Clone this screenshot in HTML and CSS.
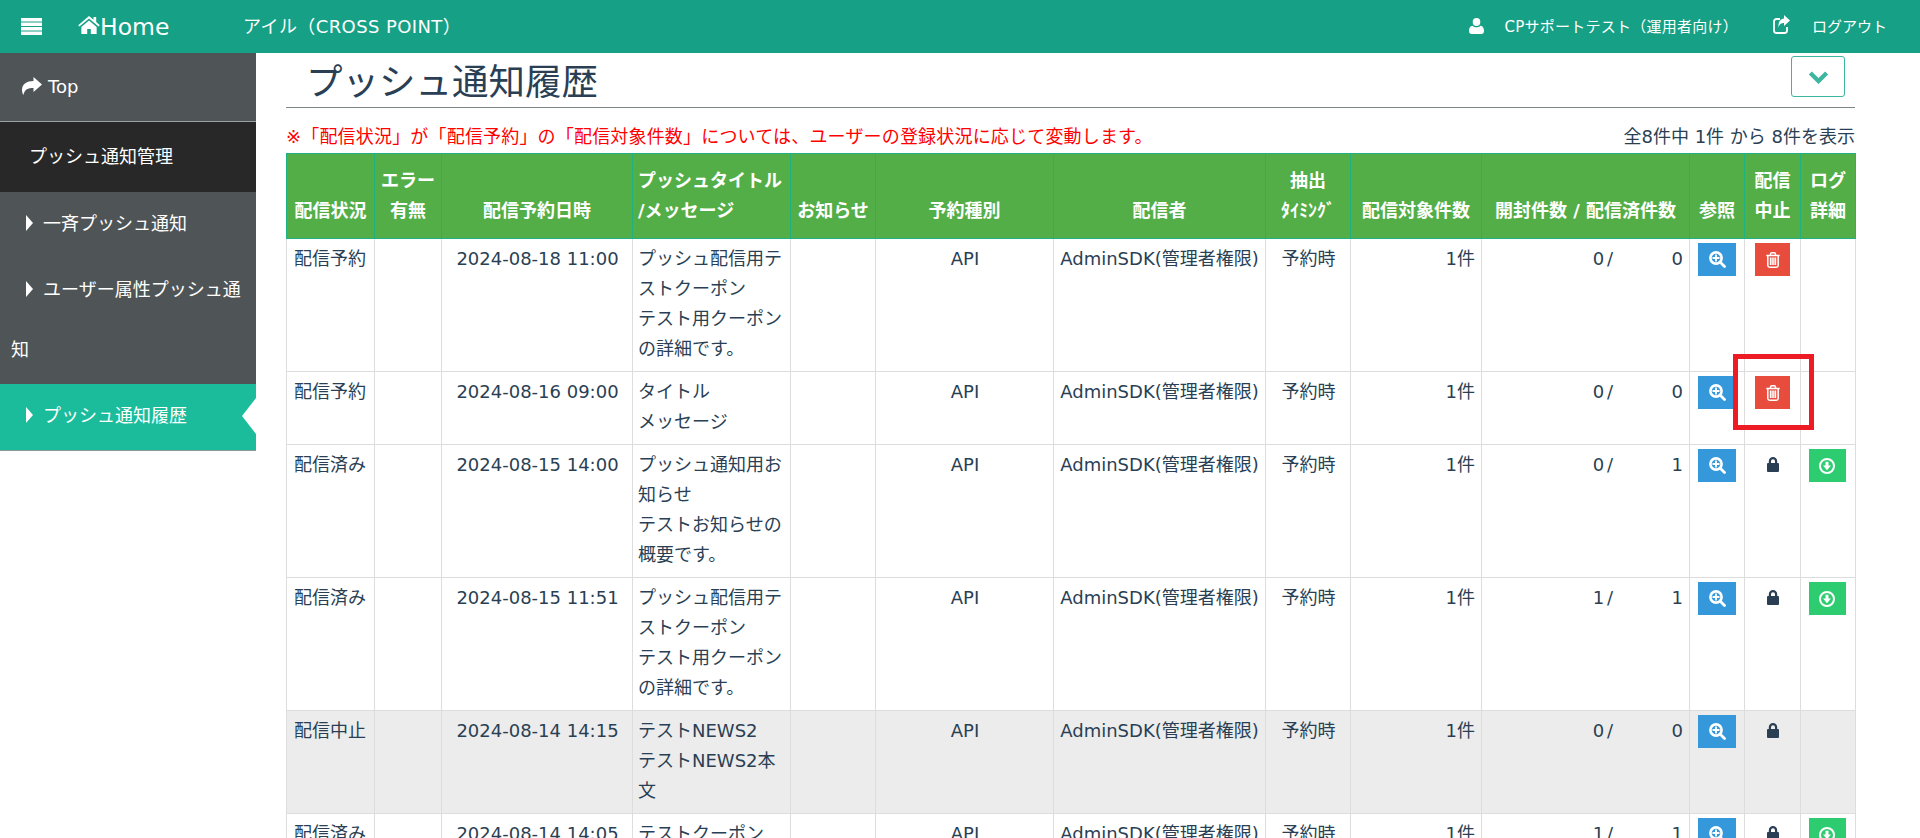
FILE: index.html
```html
<!DOCTYPE html>
<html lang="ja">
<head>
<meta charset="utf-8">
<title>プッシュ通知履歴</title>
<link rel="stylesheet" href="styles.css">
</head>
<body>
<svg class="sprite" xmlns="http://www.w3.org/2000/svg">
  <symbol id="i-home" viewBox="0 0 24 20"><path d="M12 0 L0 10.200 l1.400 1.600 L12 2.800 l10.600 9 L24 10.200 L20 6.800 V1 h-3 v3.200 Z M12 5 L3.500 12.200 V20 H10 v-5.500 h4 V20 h6.500 v-7.800 Z"/></symbol>
  <symbol id="i-share" viewBox="0 0 20 20"><path d="M11.500 1 L20 8.500 L11.500 16 V12 C6 12 2.500 13 1.500 19 C.5 18 0 15.500 0 14 C0 8 5 5 11.500 5 Z"/></symbol>
  <symbol id="i-user" viewBox="0 0 15 16"><ellipse cx="7.500" cy="4" rx="3.800" ry="4"/><path d="M0 13 C0 10 1 8 3.500 7.700 C4.500 8.700 6 9.200 7.500 9.200 S10.500 8.700 11.500 7.700 C14 8 15 10 15 13 C15 15 14 16 12.500 16 H2.500 C1 16 0 15 0 13 Z"/></symbol>
  <symbol id="i-out" viewBox="0 0 17 19"><path d="M14 12 V15.500 A2.500 2.500 0 0 1 11.500 18 H3.500 A2.500 2.500 0 0 1 1 15.500 V6.500 A2.500 2.500 0 0 1 3.500 4 H7" fill="none" stroke="currentColor" stroke-width="1.800"/><path d="M11 0 L17 5.500 L11 11 V8 C8.500 8 6.500 8.700 5.500 12.500 C5 7 7.500 3.500 11 3.500 Z"/></symbol>
  <symbol id="i-search" viewBox="0 0 17 17"><circle cx="7" cy="7" r="5.600" fill="none" stroke="currentColor" stroke-width="2.600"/><path d="M11.500 11.500 L15.500 15.500" stroke="currentColor" stroke-width="2.800" stroke-linecap="round"/><path d="M7 3.500 V10.500 M3.500 7 H10.500" stroke="currentColor" stroke-width="1.800"/></symbol>
  <symbol id="i-trash" viewBox="0 0 14 16"><path d="M.3 3.500 H13.700 M4.500 3 V2 A1.300 1.300 0 0 1 5.800 .8 H8.200 A1.300 1.300 0 0 1 9.500 2 V3 M1.800 4 V13.500 A1.800 1.800 0 0 0 3.600 15.200 H10.400 A1.800 1.800 0 0 0 12.200 13.500 V4" fill="none" stroke="currentColor" stroke-width="1.500"/><path d="M3.800 5.500 H5.600 V13 H3.800 Z M6.200 5.500 H7.800 V13 H6.200 Z M8.400 5.500 H10.200 V13 H8.400 Z"/></symbol>
  <symbol id="i-dl" viewBox="0 0 16 16"><circle cx="8" cy="8" r="7" fill="none" stroke="currentColor" stroke-width="2"/><path d="M6.500 3.800 H9.500 V7.500 H12 L8 12.200 L4 7.500 H6.500 Z"/></symbol>
  <symbol id="i-lock" viewBox="0 0 12 15"><path fill-rule="evenodd" d="M1.800 6 V4.200 A4.200 4.200 0 0 1 10.200 4.200 V6 H11 A1 1 0 0 1 12 7 V14 A1 1 0 0 1 11 15 H1 A1 1 0 0 1 0 14 V7 A1 1 0 0 1 1 6 Z M4 6 H8 V4.200 A2 2 0 0 0 4 4.200 Z"/></symbol>
</svg>

<header class="topbar">
  <svg class="burger" viewBox="0 0 21 17"><rect width="21" height="3.500"/><rect y="4.500" width="21" height="3.500"/><rect y="9" width="21" height="3.500"/><rect y="13.500" width="21" height="3.500"/></svg>
  <a class="brand"><svg class="ic-home"><use href="#i-home"/></svg>Home</a>
  <span class="site">アイル（CROSS POINT）</span>
  <span class="topright">
    <svg class="ic-user"><use href="#i-user"/></svg>
    <span class="uname">CPサポートテスト（運用者向け）</span>
    <svg class="ic-out"><use href="#i-out"/></svg>
    <span class="logout">ログアウト</span>
  </span>
</header>

<div class="layout">
  <nav class="side">
    <a class="side-top"><svg class="ic-share"><use href="#i-share"/></svg>Top</a>
    <div class="side-group">プッシュ通知管理</div>
    <a class="side-item"><i class="caret"></i>一斉プッシュ通知</a>
    <a class="side-item"><i class="caret"></i>ユーザー属性プッシュ通知</a>
    <a class="side-item active"><i class="caret"></i>プッシュ通知履歴</a>
  </nav>

  <main class="main">
    <div class="title-row">
      <h1>プッシュ通知履歴</h1>
      <button class="collapse"><svg viewBox="0 0 18 12"><path d="M2 2.500 L9 9.500 L16 2.500" fill="none" stroke="currentColor" stroke-width="3.600"/></svg></button>
    </div>
    <div class="info-row">
      <p class="notice">※「配信状況」が「配信予約」の「配信対象件数」については、ユーザーの登録状況に応じて変動します。</p>
      <p class="count">全8件中 1件 から 8件を表示</p>
    </div>
    <table class="list">
      <colgroup>
        <col class="w88"><col class="w67"><col class="w191"><col class="w158"><col class="w85"><col class="w178"><col class="w212"><col class="w85"><col class="w131"><col class="w208"><col class="w55"><col class="w56"><col class="w55">
      </colgroup>
      <thead>
        <tr>
          <th>配信状況</th><th>エラー<br>有無</th><th>配信予約日時</th><th class="l">プッシュタイトル<br>/メッセージ</th><th>お知らせ</th><th>予約種別</th><th>配信者</th><th>抽出<br>ﾀｲﾐﾝｸﾞ</th><th>配信対象件数</th><th>開封件数 / 配信済件数</th><th>参照</th><th>配信<br>中止</th><th>ログ<br>詳細</th>
        </tr>
      </thead>
      <tbody>
        <tr>
          <td>配信予約</td><td></td><td class="c">2024-08-18 11:00</td>
          <td class="t">プッシュ配信用テストクーポン<br>テスト用クーポンの詳細です。</td><td></td><td class="c">API</td><td class="c nw">AdminSDK(管理者権限)</td><td class="c">予約時</td><td class="r">1件</td>
          <td><div class="nums"><span class="a">0 /</span><span class="b">0</span></div></td>
          <td class="ic"><a class="btn blue"><svg class="s17"><use href="#i-search"/></svg></a></td>
          <td class="ic"><a class="btn red"><svg class="s-trash"><use href="#i-trash"/></svg></a></td>
          <td class="ic"></td>
        </tr>
        <tr>
          <td>配信予約</td><td></td><td class="c">2024-08-16 09:00</td>
          <td class="t">タイトル<br>メッセージ</td><td></td><td class="c">API</td><td class="c nw">AdminSDK(管理者権限)</td><td class="c">予約時</td><td class="r">1件</td>
          <td><div class="nums"><span class="a">0 /</span><span class="b">0</span></div></td>
          <td class="ic"><a class="btn blue"><svg class="s17"><use href="#i-search"/></svg></a></td>
          <td class="ic mark-host"><a class="btn red"><svg class="s-trash"><use href="#i-trash"/></svg></a><span class="mark"></span></td>
          <td class="ic"></td>
        </tr>
        <tr>
          <td>配信済み</td><td></td><td class="c">2024-08-15 14:00</td>
          <td class="t">プッシュ通知用お知らせ<br>テストお知らせの概要です。</td><td></td><td class="c">API</td><td class="c nw">AdminSDK(管理者権限)</td><td class="c">予約時</td><td class="r">1件</td>
          <td><div class="nums"><span class="a">0 /</span><span class="b">1</span></div></td>
          <td class="ic"><a class="btn blue"><svg class="s17"><use href="#i-search"/></svg></a></td>
          <td class="ic"><svg class="s-lock"><use href="#i-lock"/></svg></td>
          <td class="ic"><a class="btn green"><svg class="s16"><use href="#i-dl"/></svg></a></td>
        </tr>
        <tr>
          <td>配信済み</td><td></td><td class="c">2024-08-15 11:51</td>
          <td class="t">プッシュ配信用テストクーポン<br>テスト用クーポンの詳細です。</td><td></td><td class="c">API</td><td class="c nw">AdminSDK(管理者権限)</td><td class="c">予約時</td><td class="r">1件</td>
          <td><div class="nums"><span class="a">1 /</span><span class="b">1</span></div></td>
          <td class="ic"><a class="btn blue"><svg class="s17"><use href="#i-search"/></svg></a></td>
          <td class="ic"><svg class="s-lock"><use href="#i-lock"/></svg></td>
          <td class="ic"><a class="btn green"><svg class="s16"><use href="#i-dl"/></svg></a></td>
        </tr>
        <tr class="stopped">
          <td>配信中止</td><td></td><td class="c">2024-08-14 14:15</td>
          <td class="t">テストNEWS2<br>テストNEWS2本文</td><td></td><td class="c">API</td><td class="c nw">AdminSDK(管理者権限)</td><td class="c">予約時</td><td class="r">1件</td>
          <td><div class="nums"><span class="a">0 /</span><span class="b">0</span></div></td>
          <td class="ic"><a class="btn blue"><svg class="s17"><use href="#i-search"/></svg></a></td>
          <td class="ic"><svg class="s-lock"><use href="#i-lock"/></svg></td>
          <td class="ic"></td>
        </tr>
        <tr>
          <td>配信済み</td><td></td><td class="c">2024-08-14 14:05</td>
          <td class="t">テストクーポン</td><td></td><td class="c">API</td><td class="c nw">AdminSDK(管理者権限)</td><td class="c">予約時</td><td class="r">1件</td>
          <td><div class="nums"><span class="a">1 /</span><span class="b">1</span></div></td>
          <td class="ic"><a class="btn blue"><svg class="s17"><use href="#i-search"/></svg></a></td>
          <td class="ic"><svg class="s-lock"><use href="#i-lock"/></svg></td>
          <td class="ic"><a class="btn green"><svg class="s16"><use href="#i-dl"/></svg></a></td>
        </tr>
      </tbody>
    </table>
  </main>
</div>
</body>
</html>
```

FILE: styles.css
```css
* { box-sizing: border-box; }
html, body { margin: 0; height: 100%; overflow: hidden; background: #fff; }
body {
  font-family: "DejaVu Sans", "Noto Sans CJK JP", sans-serif;
  font-size: 18px;
  line-height: 30px;
  color: #2a3f54;
}
.sprite { display: none; }
svg { fill: currentColor; display: block; }

/* top bar */
.topbar {
  height: 53px;
  background: #16a085;
  color: #fff;
  display: flex;
  align-items: center;
  padding-left: 21px;
}
.burger { width: 21px; height: 17px; margin-right: 36px; }
.brand { display: flex; align-items: center; font-size: 23.500px; width: 165px; }
.ic-home { width: 22px; height: 18px; margin-top: -3px; }
.site { font-size: 18px; letter-spacing: .4px; }
.topright { margin-left: auto; display: flex; align-items: center; padding-right: 33px; font-size: 15px; }
.ic-user { width: 15px; height: 16px; margin-right: 20px; margin-top: -1px; }
.uname { margin-right: 35px; letter-spacing: .25px; }
.ic-out { width: 17px; height: 19px; margin-right: 22px; margin-top: -4px; }
.logout { font-size: 15px; }

/* layout */
.layout { display: flex; align-items: flex-start; }
.side { width: 256px; flex: none; color: #fff; background: #4f5557; }
.side a, .side div { display: block; }
.side-top {
  height: 69px;
  padding: 19px 0 0 22px;
  display: flex !important;
  align-items: flex-start;
  border-bottom: 1px solid #9aa0a0;
}
.ic-share { width: 20px; height: 20px; margin: 4px 6px 0 0; }
.side-group { height: 70px; background: #282828; padding: 20px 0 0 29px; }
.side-item { position: relative; padding: 2px 0 4px 11px; line-height: 60px; }
.side-item.active { background: #1abc9c; border-bottom: 1px solid #8a9a96; padding-bottom: 4px; }
.side-item.active::after {
  content: "";
  position: absolute;
  right: 0;
  top: 14px;
  border-style: solid;
  border-width: 18.500px 14px 18.500px 0;
  border-color: transparent #fff transparent transparent;
}
.caret {
  display: inline-block;
  margin: 0 10px 0 15px;
  border-style: solid;
  border-width: 8px 0 8px 7px;
  border-color: transparent transparent transparent #fff;
  vertical-align: -1px;
}

/* main */
.main { flex: 1; min-width: 0; padding: 0 65px 0 30px; }
.title-row {
  height: 55px;
  border-bottom: 1px solid #7f8688;
  display: flex;
  justify-content: space-between;
  align-items: flex-start;
  padding-left: 20px;
}
h1 { margin: 0; font-weight: 400; font-size: 36.500px; line-height: 54px; padding-top: 3px; }
.collapse {
  width: 54px;
  height: 41px;
  margin: 3px 10px 0 0;
  padding: 0;
  background: #fff;
  border: 1px solid #3eb59f;
  border-radius: 3px;
  color: #3eb59f;
  display: flex;
  align-items: center;
  justify-content: center;
}
.collapse svg { width: 21px; height: 14px; }
.info-row { height: 45px; display: flex; justify-content: space-between; align-items: flex-end; padding-bottom: 1px; }
.info-row p { margin: 0; }
.notice { color: #f00; letter-spacing: .18px; }

/* table */
.list { width: 1569px; table-layout: fixed; border-collapse: collapse; }
.w88 { width: 88px; } .w67 { width: 67px; } .w191 { width: 191px; } .w158 { width: 158px; }
.w85 { width: 85px; } .w178 { width: 178px; } .w212 { width: 212px; } .w131 { width: 131px; }
.w208 { width: 208px; } .w55 { width: 55px; } .w56 { width: 56px; }
.list th {
  background: #54ae47;
  color: #fff;
  border: 1px solid #1fb27f;
  padding: 12px 0;
  font-weight: 700;
  text-align: center;
  vertical-align: bottom;
  white-space: nowrap;
}
.list th.l { text-align: left; padding-left: 5px; }
.list td {
  border: 1px solid #ddd;
  padding: 5px 6px 7px 7px;
  vertical-align: top;
}
.list td.t { padding-left: 5px; padding-right: 8px; }
.list td.c { text-align: center; }
.list td.nw { white-space: nowrap; padding-left: 0; padding-right: 0; }
.list td.r { text-align: right; }
.stopped td { background: #ececec; }
.nums { display: flex; justify-content: flex-end; }
.nums .a { word-spacing: -3px; }
.nums .b { width: 70px; text-align: right; }

.list td.ic { padding: 4px 0 0; }
.btn { display: flex; align-items: center; justify-content: center; height: 33px; margin: 0 auto; color: #fff; }
.blue { width: 38px; background: #3498db; }
.red { width: 35px; background: #e74c3c; }
.green { width: 37px; background: #2ecc71; position: relative; left: -1px; }
.s17 { width: 17px; height: 17px; }
.s16 { width: 16px; height: 16px; }
.s-trash { width: 14px; height: 16px; }
.s-lock { width: 12px; height: 15px; margin: 8px auto 0; color: #2a3f54; }

.mark-host { position: relative; }
.mark {
  position: absolute;
  left: -12px;
  top: -18px;
  width: 81px;
  height: 76px;
  border: 5px solid #ed1c24;
}
```
